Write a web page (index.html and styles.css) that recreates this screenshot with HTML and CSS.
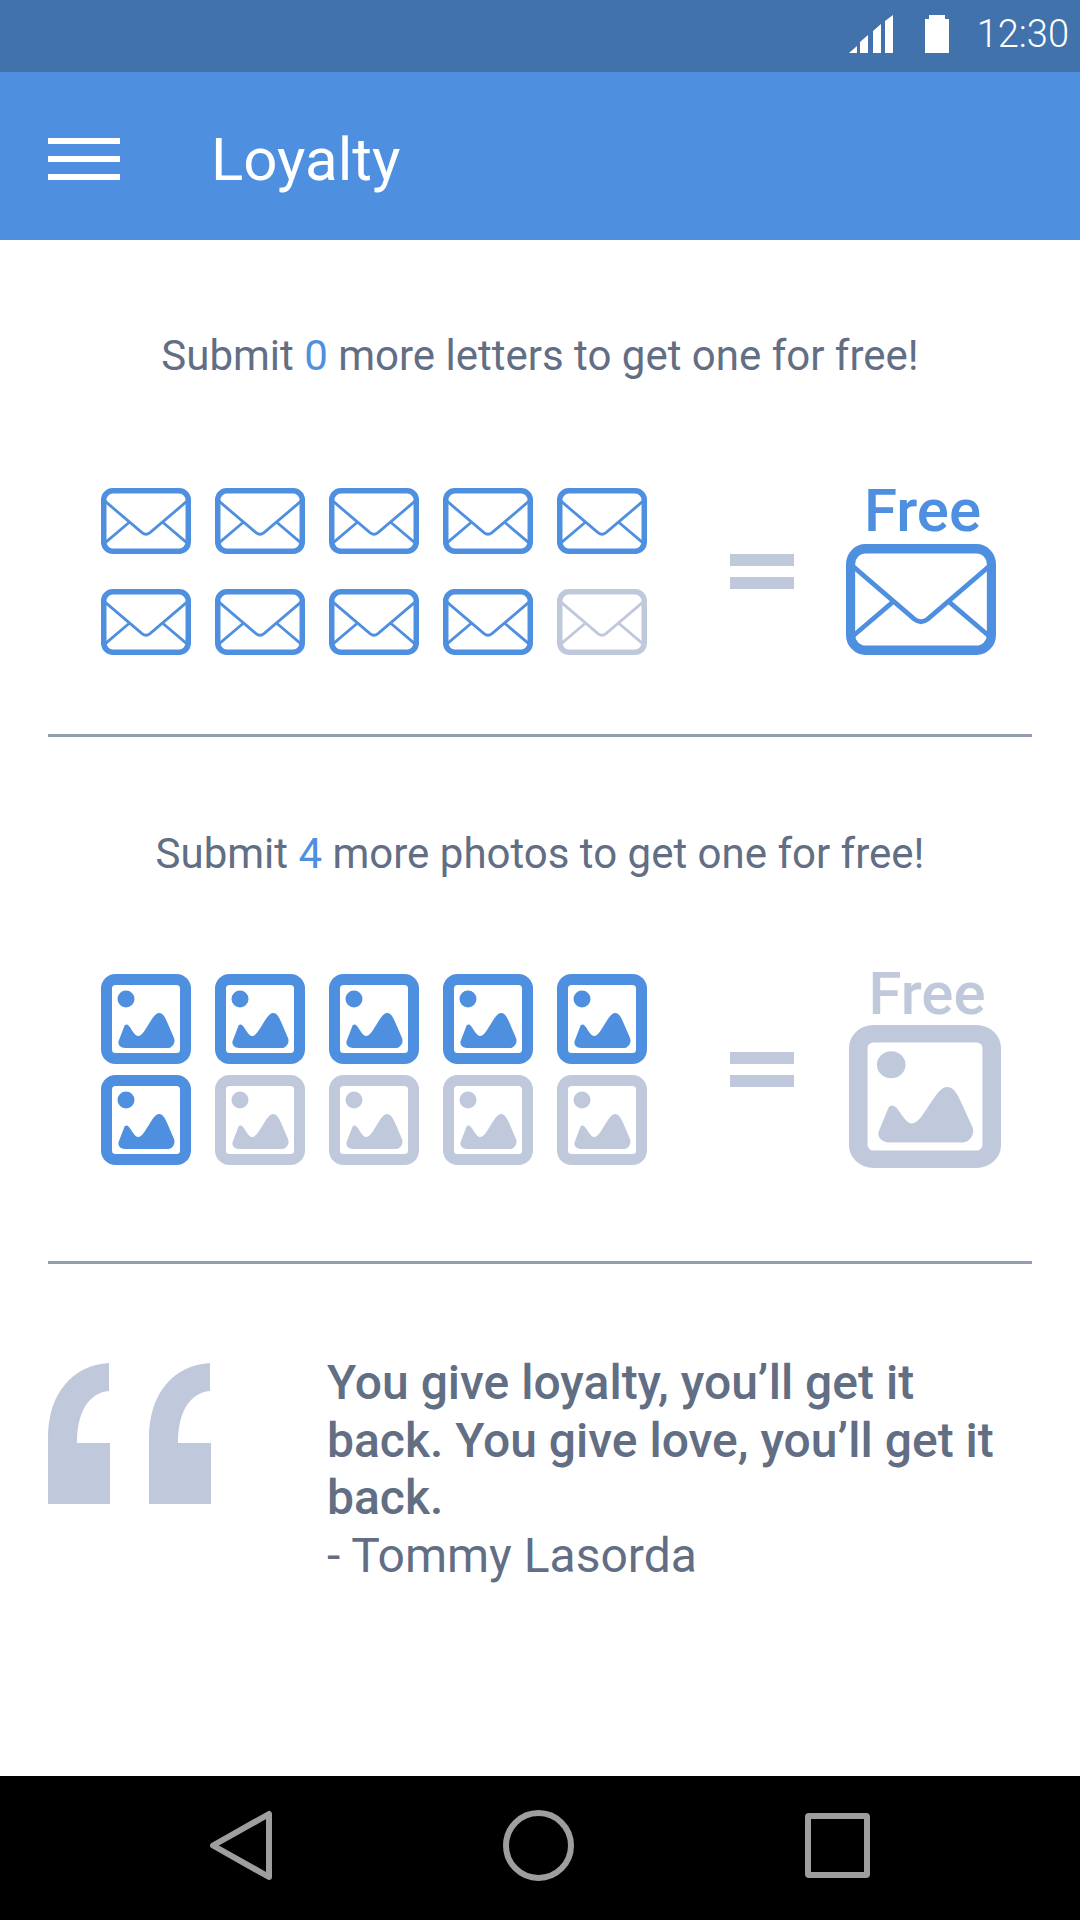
FILE: index.html
```html
<!DOCTYPE html>
<html lang="en">
<head>
    <meta charset="UTF-8">
    <meta name="viewport" content="width=device-width, initial-scale=1.0">
    <title>Loyalty</title>
    <link rel="stylesheet" href="styles.css">
</head>
<body>
    <svg class="icon-defs" width="0" height="0" aria-hidden="true">
        <symbol id="letter" viewBox="0 0 90 65" preserveAspectRatio="none">
            <rect x="2.75" y="2.75" width="84.5" height="59.5" rx="9" fill="none" stroke="currentColor" stroke-width="5.5"/>
            <path d="M4 13 L41 44 Q45 47 49 44 L86 13 M28 34 L4 54 M62 34 L86 54" fill="none" stroke="currentColor" stroke-width="2.8"/>
        </symbol>
        <symbol id="photo" viewBox="0 0 90 90" preserveAspectRatio="none">
            <rect x="5.5" y="5.5" width="79" height="79" rx="9" fill="none" stroke="currentColor" stroke-width="11"/>
            <ellipse cx="25" cy="25" rx="8.5" ry="8.5" fill="currentColor"/>
            <path d="M18 66 L23 53 C24 50 26 50 28 52 C31 56 34 62 37 62 C41 62 44 56 49 48 C52 43 55 39 58 39 C62 39 64 43 67 50 L73 64 C75 69 71 74 67 74 H24 C19 74 16 70 18 66 Z" fill="currentColor"/>
        </symbol>
    </svg>

    <div class="app">
        <div class="status-bar">
            <svg class="signal" width="44" height="38" viewBox="0 0 44 38">
                <path d="M0 38 L8 31 V38 Z M11 38 V27 L19 20 V38 Z M24 38 V16 L32 9 V38 Z M36 38 V6 L44 0 V38 Z" fill="#fff"/>
            </svg>
            <svg class="battery" width="24" height="38" viewBox="0 0 24 38">
                <path d="M0 4 H4 V0 H20 V4 H24 V38 H0 Z" fill="#fff"/>
            </svg>
            <span class="clock">12:30</span>
        </div>

        <header class="app-bar">
            <div class="menu-icon"><span></span><span></span><span></span></div>
            <h1>Loyalty</h1>
        </header>

        <main class="content">
            <section class="card card-letters">
                <p class="message">Submit <span class="count">0</span> more letters to get one for free!</p>
                <div class="reward-row">
                    <div class="stamps stamps-letters">
                        <svg class="stamp stamp-letter"><use href="#letter"/></svg>
                        <svg class="stamp stamp-letter"><use href="#letter"/></svg>
                        <svg class="stamp stamp-letter"><use href="#letter"/></svg>
                        <svg class="stamp stamp-letter"><use href="#letter"/></svg>
                        <svg class="stamp stamp-letter"><use href="#letter"/></svg>
                        <svg class="stamp stamp-letter"><use href="#letter"/></svg>
                        <svg class="stamp stamp-letter"><use href="#letter"/></svg>
                        <svg class="stamp stamp-letter"><use href="#letter"/></svg>
                        <svg class="stamp stamp-letter"><use href="#letter"/></svg>
                        <svg class="stamp stamp-letter empty"><use href="#letter"/></svg>
                    </div>
                    <div class="equals"><span></span><span></span></div>
                    <div class="reward">
                        <div class="free">Free</div>
                        <svg class="reward-letter"><use href="#letter"/></svg>
                    </div>
                </div>
            </section>

            <section class="card card-photos">
                <p class="message">Submit <span class="count">4</span> more photos to get one for free!</p>
                <div class="reward-row">
                    <div class="stamps stamps-photos">
                        <svg class="stamp stamp-photo"><use href="#photo"/></svg>
                        <svg class="stamp stamp-photo"><use href="#photo"/></svg>
                        <svg class="stamp stamp-photo"><use href="#photo"/></svg>
                        <svg class="stamp stamp-photo"><use href="#photo"/></svg>
                        <svg class="stamp stamp-photo"><use href="#photo"/></svg>
                        <svg class="stamp stamp-photo"><use href="#photo"/></svg>
                        <svg class="stamp stamp-photo empty"><use href="#photo"/></svg>
                        <svg class="stamp stamp-photo empty"><use href="#photo"/></svg>
                        <svg class="stamp stamp-photo empty"><use href="#photo"/></svg>
                        <svg class="stamp stamp-photo empty"><use href="#photo"/></svg>
                    </div>
                    <div class="equals"><span></span><span></span></div>
                    <div class="reward reward-locked">
                        <div class="free">Free</div>
                        <svg class="reward-photo"><use href="#photo"/></svg>
                    </div>
                </div>
            </section>

            <section class="quote">
                <div class="quote-marks">
                    <svg width="62" height="141" viewBox="0 0 62 141"><path d="M61 0 C25 2 0 30 0 75 V141 H62 V80 H29 C29 50 40 30 61 28 Z"/></svg>
                    <svg width="62" height="141" viewBox="0 0 62 141"><path d="M61 0 C25 2 0 30 0 75 V141 H62 V80 H29 C29 50 40 30 61 28 Z"/></svg>
                </div>
                <blockquote>
                    <strong>You give loyalty, you’ll get it back. You give love, you’ll get it back.</strong>
                    <cite>- Tommy Lasorda</cite>
                </blockquote>
            </section>
        </main>

        <nav class="nav-bar">
            <svg width="62" height="71" viewBox="0 0 62 71"><path d="M59 4 V67 L3 35.5 Z"/></svg>
            <svg width="71" height="71" viewBox="0 0 71 71"><circle cx="35.5" cy="35.5" r="32.5"/></svg>
            <svg width="65" height="65" viewBox="0 0 65 65"><rect x="3" y="3" width="59" height="59" rx="1"/></svg>
        </nav>
    </div>
</body>
</html>
```

FILE: styles.css
```css
:root {
    --primary: #4e8fe0;
    --primary-dark: #4272ab;
    --muted: #c0c9dc;
    --text: #626e84;
    --line: #929db0;
}

* {
    box-sizing: border-box;
}

body {
    margin: 0;
    font-family: 'Roboto', sans-serif;
    color: var(--text);
    background-color: white;
}

.icon-defs {
    position: absolute;
}

.app {
    display: flex;
    flex-direction: column;
    height: 1920px;
}

/* status bar */
.status-bar {
    display: flex;
    align-items: center;
    justify-content: flex-end;
    height: 72px;
    padding-right: 11px;
    padding-bottom: 4px;
    background-color: var(--primary-dark);
    color: white;
}

.battery {
    margin-left: 32px;
}

.clock {
    margin-left: 28px;
    font-size: 38px;
    font-weight: 300;
}

/* app bar */
.app-bar {
    display: flex;
    align-items: center;
    height: 168px;
    padding-left: 48px;
    padding-top: 6px;
    background-color: var(--primary);
    color: white;
}

.menu-icon {
    display: flex;
    flex-direction: column;
    gap: 12px;
    width: 72px;
    margin-right: 91px;
}

.menu-icon span {
    height: 6px;
    background-color: white;
}

h1 {
    margin: 0;
    font-size: 60px;
    font-weight: 400;
}

/* loyalty cards */
.content {
    flex: 1;
    padding: 0 48px;
}

.card {
    border-bottom: 3px solid var(--line);
}

.card-letters {
    height: 497px;
    padding-top: 92px;
}

.card-photos {
    height: 527px;
    padding-top: 93px;
}

.message {
    margin: 0;
    font-size: 42px;
    line-height: 48px;
    text-align: center;
}

.count {
    color: var(--primary);
}

.reward-row {
    display: flex;
    align-items: center;
    padding-left: 53px;
}

.card-letters .reward-row {
    margin-top: 108px;
}

.card-photos .reward-row {
    margin-top: 96px;
}

.stamps {
    display: grid;
    grid-template-columns: repeat(5, 90px);
    column-gap: 24px;
}

.stamps-letters {
    row-gap: 35px;
}

.stamps-photos {
    row-gap: 11px;
}

.stamp {
    display: block;
    width: 90px;
    color: var(--primary);
}

.stamp-letter {
    height: 66px;
}

.stamp-photo {
    height: 90px;
}

.stamp.empty {
    color: var(--muted);
}

.equals {
    display: flex;
    flex-direction: column;
    gap: 11px;
    width: 64px;
    margin-left: 83px;
}

.equals span {
    height: 12px;
    background-color: var(--muted);
}

.reward {
    display: flex;
    flex-direction: column;
    align-items: center;
    margin-left: 52px;
    color: var(--primary);
}

.reward-locked {
    margin: -3px 0 -3px 55px;
    color: var(--muted);
}

.free {
    margin-bottom: 10px;
    padding-left: 3px;
    font-size: 60px;
    font-weight: 500;
    line-height: 46px;
}

.reward-locked .free {
    margin-bottom: 8px;
    padding-left: 4px;
    line-height: 46px;
}

.reward-letter {
    display: block;
    width: 150px;
    height: 111px;
}

.reward-photo {
    display: block;
    width: 152px;
    height: 143px;
}

/* quote */
.quote {
    display: flex;
    padding-top: 99px;
}

.quote-marks {
    display: flex;
    gap: 39px;
    width: 279px;
    flex-shrink: 0;
}

.quote-marks svg {
    fill: var(--muted);
}

blockquote {
    margin: -9px 0 0;
    font-size: 48px;
    line-height: 57.5px;
}

blockquote strong {
    display: block;
    font-weight: 500;
}

cite {
    display: block;
    font-style: normal;
}

/* android nav */
.nav-bar {
    display: flex;
    align-items: center;
    justify-content: center;
    gap: 231px;
    height: 144px;
    padding-bottom: 6px;
    background-color: black;
}

.nav-bar svg {
    fill: none;
    stroke: #9e9e9e;
    stroke-width: 6;
    stroke-linejoin: round;
}
```
